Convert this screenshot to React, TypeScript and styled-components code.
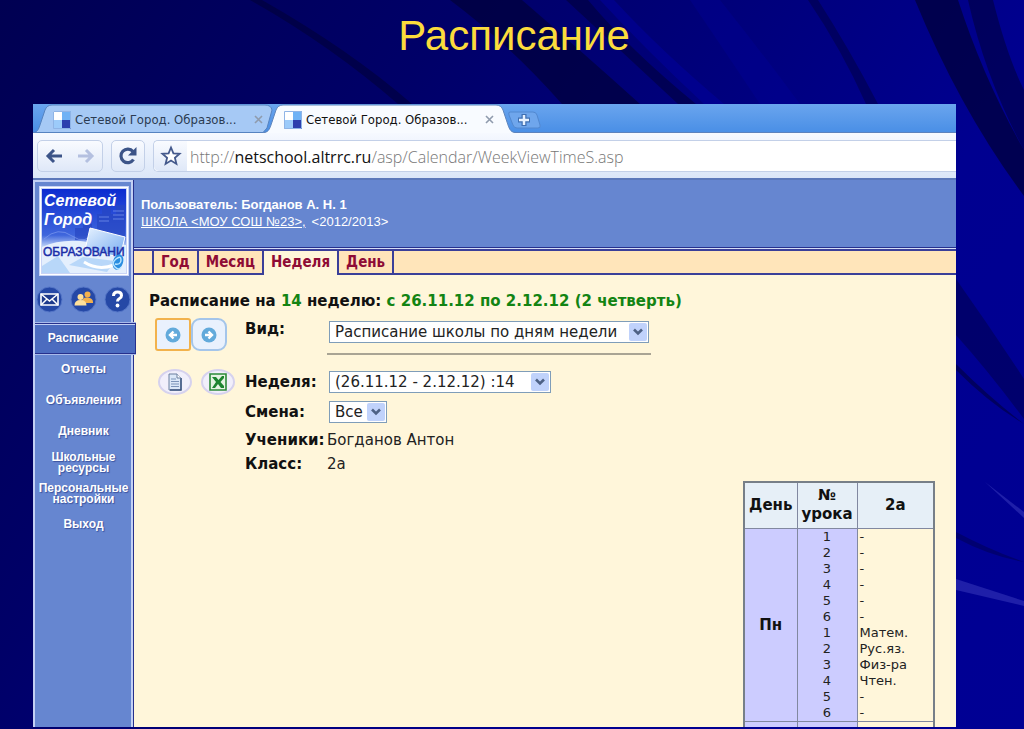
import React from "react";
import styled, { createGlobalStyle, css } from "styled-components";

const verdana = `"DejaVu Sans", Verdana, sans-serif`;
const tahoma = `"DejaVu Sans Condensed", "DejaVu Sans", Tahoma, sans-serif`;
const arial = `"Liberation Sans", Arial, sans-serif`;

const GlobalStyle = createGlobalStyle`
  *, *::before, *::after { box-sizing: border-box; }
  body { margin: 0; background: #000078; font-family: ${verdana}; overflow: hidden; }
  button, select, input { font: inherit; color: inherit; margin: 0; }
`;

const Slide = styled.main`
  position: relative;
  isolation: isolate;
  display: flex;
  flex-direction: column;
  height: 100vh;
  padding: 0 68px 2px 33px;
  background: linear-gradient(125deg, #000052 0%, #000068 30%, #000090 70%, #000094 100%);
`;

const Backdrop = styled.svg`
  position: absolute;
  inset: 0;
  z-index: -1;
  width: 100%;
  height: 100%;
`;

const SlideTitle = styled.h1`
  flex: none;
  margin: 0;
  height: 104px;
  padding: 12px 0 0 39px;
  text-align: center;
  font: 400 42px/48px ${arial};
  color: #fbdc3c;
`;

const Browser = styled.section`
  flex: 1;
  min-height: 0;
  display: flex;
  flex-direction: column;
  overflow: hidden;
  background: #fff6da;
`;

const TabStrip = styled.div`
  flex: none;
  display: flex;
  height: 29px;
  background: linear-gradient(#6aa5ee, #4a8fe6);
  border-bottom: 1px solid #5c82bd;
  font: 13px/28px ${tahoma};
`;

const BrowserTab = styled.div<{ $active?: boolean }>`
  position: relative;
  isolation: isolate;
  display: flex;
  align-items: center;
  gap: 4px;
  width: 231px;
  height: 29px;
  padding: 2px 1px 0 20px;
  color: ${(p) => (p.$active ? "#111" : "#2b3b52")};
`;

const TabShape = styled.svg`
  position: absolute;
  top: 0;
  left: 0;
  z-index: -1;
  overflow: visible;
`;

const TabLabel = styled.span`
  flex: 1;
  white-space: nowrap;
`;

const IconButton = styled.button`
  display: grid;
  place-items: center;
  padding: 0;
  border: 0;
  background: none;
`;

const Toolbar = styled.div`
  flex: none;
  display: flex;
  align-items: center;
  gap: 8px;
  height: 45px;
  padding: 1px 0 0 4px;
  background: linear-gradient(#f6f9ff, #dbe6f8);
`;

const ButtonGroup = styled.div`
  display: flex;
  height: 32px;
  border: 1px solid #c3d0e8;
  border-radius: 5px;
  background: linear-gradient(#f9fbff, #dfe8f8);

  button { width: 32px; }
`;

const AddressBar = styled.div`
  flex: 1;
  display: flex;
  height: 32px;
  border: 1px solid #c3d0e8;
  border-right: 0;
  border-radius: 5px 0 0 5px;
  background: #fff;

  > button {
    width: 33px;
    background: linear-gradient(#f9fbff, #dfe8f8);
    border-radius: 5px 0 0 5px;
  }
`;

const Url = styled.div`
  padding-left: 3px;
  color: #777;
  font: 300 16px/32px "Open Sans", ${arial};
  white-space: nowrap;

  b { font-weight: 400; color: #111; }
`;

const Page = styled.div`
  flex: 1;
  min-height: 0;
  display: flex;
  border-top: 2px solid #5c78ba;
`;

const Sidebar = styled.aside`
  flex: none;
  display: flex;
  flex-direction: column;
  width: 101px;
  background: #6686d0;
  border-left: 2px solid #c3d0f4;
  border-right: 1px solid #26308c;
  box-shadow: inset -2px 0 #c3d0f4, inset 0 2px #c3d0f4;
`;

const LogoFrame = styled.div`
  width: 90px;
  height: 90px;
  margin: 6px 0 0 4px;

  svg { display: block; }
`;

const QuickLinks = styled.div`
  display: flex;
  gap: 7px;
  height: 47px;
  padding: 10px 0 0 1px;

  button { width: 27px; height: 27px; }
`;

const Menu = styled.nav`
  display: flex;
  flex-direction: column;
`;

const MenuLink = styled.a<{ $active?: boolean }>`
  display: flex;
  align-items: center;
  justify-content: center;
  height: 31px;
  padding-right: 1px;
  text-align: center;
  text-decoration: none;
  white-space: pre-line;
  font: 700 12px/11px ${arial};
  color: #fff;
  text-shadow: 1px 1px 1px #3a539f;

  ${(p) =>
    p.$active &&
    css`
      position: relative;
      margin-right: -3px;
      padding-right: 4px;
      background: #4c6cc0;
      border: 1px solid #26308c;
      border-left: 0;
      box-shadow: inset 0 1px #c3d0f4, 0 -1px #a9baea, 0 1px #a9baea;
    `}
`;

const Main = styled.div`
  flex: 1;
  min-width: 0;
  display: flex;
  flex-direction: column;
`;

const UserBar = styled.header`
  flex: none;
  height: 68px;
  padding: 16px 8px 0 7px;
  background: #6686d0;
  border-bottom: 1px solid #26308c;
  font: 13px/17px ${arial};
  color: #fff;

  p { margin: 0; }
  a { color: inherit; margin-right: 6px; }
`;

const ViewTabs = styled.nav`
  flex: none;
  display: flex;
  height: 27px;
  padding: 0 0 0 18px;
  border-top: 1px solid #d6def6;
  box-shadow: inset 0 2px #3a3f99;
  background: linear-gradient(#3a3f99, #3a3f99) 0 100% / 100% 2px no-repeat, #ffe5ba;
`;

const ViewTab = styled.a<{ $active?: boolean }>`
  display: flex;
  align-items: center;
  margin-top: 2px;
  padding: 0 7px 2px;
  border-left: 2px solid #3a3f99;
  font: 700 15px/20px "DejaVu Sans Condensed", ${verdana};
  color: #8e0b35;
  text-decoration: none;
  background: ${(p) => (p.$active ? "#fff6da" : "none")};

  &:last-child { border-right: 2px solid #3a3f99; }
`;

const Content = styled.div`
  flex: 1;
  min-height: 0;
  display: flex;
  flex-direction: column;
  padding: 15px 21px 0 15px;
`;

const Heading = styled.h2`
  flex: none;
  margin: 0;
  font: 700 15px/22px ${verdana};
  color: #111;

  span { color: #138413; }
`;

const Controls = styled.div`
  flex: none;
  display: grid;
  grid-template-columns: 96px 1fr;
  height: 169px;
`;

const Tools = styled.div`
  display: flex;
  flex-direction: column;
  gap: 18px;
  padding: 6px 0 0 6px;
`;

const ArrowRow = styled.div`
  display: flex;
`;

const ExportRow = styled.div`
  display: flex;
  gap: 9px;
  padding-left: 3px;
`;

const ArrowButton = styled(IconButton)<{ $focused?: boolean }>`
  width: 36px;
  height: 33px;
  border: 2px solid ${(p) => (p.$focused ? "#f2b24c" : "#a4c5ea")};
  border-radius: ${(p) => (p.$focused ? 3 : 9)}px;
  background: #e9f1fd;
`;

const ExportButton = styled(IconButton)`
  width: 34px;
  height: 26px;
  border: 2px solid #d6d2ee;
  border-radius: 50%;
  background: #f1effb;
`;

const Fields = styled.div`
  display: flex;
  flex-direction: column;
  align-items: flex-start;
`;

const Field = styled.div<{ $height: number; $raised?: boolean }>`
  display: grid;
  grid-template-columns: 82px auto;
  align-items: center;
  height: ${(p) => p.$height}px;
  font: 15px/20px ${verdana};
  color: #222;
  white-space: nowrap;

  label, strong { font-weight: 700; color: #111; }
  label { padding-bottom: ${(p) => (p.$raised ? 6 : 0)}px; }
`;

const SelectWrap = styled.div<{ $width: number }>`
  position: relative;
  width: ${(p) => p.$width}px;
  margin-left: 2px;

  select {
    appearance: none;
    display: block;
    width: 100%;
    height: 22px;
    padding: 0 5px;
    border: 1px solid #7f9db9;
    border-radius: 0;
    background: #fff;
    line-height: 20px;
  }

  svg {
    position: absolute;
    top: 2px;
    right: 2px;
    pointer-events: none;
  }
`;

const Rule = styled.hr`
  width: 324px;
  height: 2px;
  margin: 1px 0 15px 82px;
  border: 0;
  background: #a9a494;
`;

const Timetable = styled.table`
  align-self: flex-end;
  width: 192px;
  table-layout: fixed;
  border: 2px solid #777f88;
  border-collapse: collapse;
  font: 13px/16px ${verdana};
  color: #222;

  th, td { border: 1px solid #8188a0; padding: 0; }
  thead th {
    height: 46px;
    background: #e6eff7;
    font: 700 15px/19px ${verdana};
    color: #111;
  }
  tbody th {
    background: #ccccff;
    font-size: 15px;
    color: #111;
  }
`;

const NumberCell = styled.td`
  height: 193px;
  background: #ccccff;
  text-align: center;
`;

const LessonCell = styled.td`
  && { padding-left: 2px; }
`;

const Favicon = () => (
  <svg width="18" height="18" viewBox="0 0 18 18" aria-hidden="true">
    <path fill="#fff" d="M0 0h9v9H0z" />
    <path fill="#6fb2f5" d="M9 0h9v9H9z" />
    <path fill="#9ccbfa" d="M0 9h9v9H0z" />
    <path fill="#2d3fae" d="M9 9h9v9H9z" />
    <path fill="none" stroke="#8fb4e6" d="M.5.5h17v17H.5z" />
  </svg>
);

const PageTab = ({ title, active }: { title: string; active?: boolean }) => (
  <BrowserTab $active={active}>
    <TabShape width="240" height="29" aria-hidden="true">
      {active ? (
        <>
          <path d="M0 29C5 28 6 24 8 18L12 6Q14 1 19 1H232Q237 1 239 6L243 18C245 24 246 28 251 29Z" fill="#f8fbff" />
          <path d="M0 28.500C5 28 6 24 8 18L12 6Q14 1 19 1H232Q237 1 239 6L243 18C245 24 246 28 251 28.500" fill="none" stroke="#5f86bd" />
        </>
      ) : (
        <path d="M1 28.500C5 28 6 24 8 18L12 6Q14 1 19 1H232Q238 1 239 6L234 24 230 28.500Z" fill="#a6c9f5" stroke="#5683c0" />
      )}
    </TabShape>
    <Favicon />
    <TabLabel>{title}</TabLabel>
    <IconButton aria-label="Закрыть вкладку">
      <svg width="9" height="9" viewBox="0 0 9 9">
        <path d="M1 1l7 7M8 1L1 8" stroke="#8f9bad" strokeWidth="1.6" />
      </svg>
    </IconButton>
  </BrowserTab>
);

const Select = ({ id, width, value }: { id: string; width: number; value: string }) => (
  <SelectWrap $width={width}>
    <select id={id} defaultValue={value}>
      <option>{value}</option>
    </select>
    <svg width="18" height="18" viewBox="0 0 18 18" aria-hidden="true">
      <rect width="18" height="18" rx="2" fill="#c0d2fb" />
      <path d="M5 6.500l4 4 4-4" fill="none" stroke="#4d6185" strokeWidth="2.600" />
    </svg>
  </SelectWrap>
);

const Logo = () => (
  <svg width="90" height="90" viewBox="0 0 90 90" role="img" aria-label="Сетевой Город">
    <defs>
      <linearGradient id="sky" x1="0" y1="0" x2="0" y2="1">
        <stop offset="0" stopColor="#0b2bd0" />
        <stop offset=".55" stopColor="#3f66dc" />
        <stop offset=".7" stopColor="#c9dcfa" />
        <stop offset="1" stopColor="#fff" />
      </linearGradient>
      <linearGradient id="screen" x1="0" y1="0" x2="1" y2="1">
        <stop offset="0" stopColor="#e7f2ff" />
        <stop offset="1" stopColor="#75abf1" />
      </linearGradient>
    </defs>
    <rect width="90" height="90" fill="#c9d4f6" />
    <rect x="1.500" y="1.500" width="87" height="87" fill="none" stroke="#fff" />
    <rect x="3" y="3" width="84" height="84" fill="url(#sky)" />
    <path d="M58 42V28h5v-6h9v6h5v-9h9v31H58zM36 54V42h8v-4h9v16z" fill="#2746c2" opacity=".7" />
    <path d="M60 31h10M60 35h10M74 25h11M74 29h11M74 33h11M5 53q14-13 28-3t24-6" fill="none" stroke="#7d9af0" opacity=".7" />
    <path d="M3 61q20-9 46-5l38 3v28H3z" fill="#e4effd" />
    <path d="M51 42l35 9-5 20-35-7z" fill="url(#screen)" stroke="#fff" />
    <path d="M3 80l16-10 12 17H3zM44 71l32 4-8 11-38-7z" fill="#a5cdf7" opacity=".7" />
    <path d="M45 76q14 9 30 3" fill="none" stroke="#fff" strokeWidth="3" />
    <g fontFamily={arial} fontWeight="700">
      <g fontStyle="italic" fontSize="16" fill="#fff">
        <text x="5" y="20">Сетевой</text>
        <text x="5" y="39">Город</text>
      </g>
      <text x="4" y="70" fontSize="12" fontWeight="400" fill="#1b2ea8" stroke="#1b2ea8" strokeWidth=".5">ОБРАЗОВАНИ</text>
    </g>
    <ellipse cx="79" cy="76" rx="5" ry="8" transform="rotate(18 79 76)" fill="#2a8ee0" />
    <path d="M76 78q6 1 6-4t-5-1-1 8 6 0" fill="none" stroke="#b9e4ff" strokeWidth="1.500" />
  </svg>
);

const RoundIcon = ({ label, children }: { label: string; children: React.ReactNode }) => (
  <IconButton aria-label={label}>
    <svg width="27" height="27" viewBox="0 0 27 27">
      <circle cx="13.500" cy="13.500" r="12.500" fill="#2548a6" stroke="#5576c8" />
      {children}
    </svg>
  </IconButton>
);

const CircleArrow = ({ flip }: { flip?: boolean }) => (
  <svg width="16" height="16" viewBox="0 0 16 16">
    <circle cx="8" cy="8" r="7.500" fill="#62aadb" />
    <path
      d="M12 8H6M8.500 4.500L5 8l3.500 3.500"
      fill="none"
      stroke="#fff"
      strokeWidth="2.400"
      transform={flip ? "rotate(180 8 8)" : undefined}
    />
  </svg>
);

const menu = ["Расписание", "Отчеты", "Объявления", "Дневник", "Школьные\nресурсы", "Персональные\nнастройки", "Выход"];
const views = ["Год", "Месяц", "Неделя", "День"];
const lessons = [
  ["1", "-"], ["2", "-"], ["3", "-"], ["4", "-"], ["5", "-"], ["6", "-"],
  ["1", "Матем."], ["2", "Рус.яз."], ["3", "Физ-ра"], ["4", "Чтен."], ["5", "-"], ["6", "-"],
];

export default function App() {
  return (
    <Slide>
      <GlobalStyle />
      <Backdrop viewBox="0 0 1024 729" preserveAspectRatio="none" aria-hidden="true">
        <path d="M250 0h12Q350 50 412 104H398Q330 45 250 0z" fill="#000030" opacity=".5" />
        <path d="M450 0h72Q580 50 640 104H562Q510 45 450 0z" fill="#000030" opacity=".6" />
        <path d="M566 0h22Q630 50 696 104H678Q620 50 566 0z" fill="#000030" opacity=".5" />
        <path d="M600 0h14Q660 50 724 104H704Q646 50 600 0z" fill="#0000a0" opacity=".5" />
        <path d="M690 0h30Q760 50 800 104H760Q724 50 690 0z" fill="#0000a0" opacity=".3" />
        <path d="M808 0h10Q850 50 878 104H866Q842 50 808 0z" fill="#000040" opacity=".5" />
        <path d="M915 0h43Q984 80 1024 150v46Q960 110 915 0z" fill="#000030" opacity=".65" />
        <path d="M968 0h25q14 56 31 90v60Q986 80 968 0z" fill="#000030" opacity=".5" />
        <path d="M956 279q34 48 68 100v40q-34-46-68-84z" fill="#000040" opacity=".45" />
        <path d="M956 364q34 34 68 60-34-20-68-54z" fill="#000040" opacity=".6" />
        <path d="M985 482l39 30v6z" fill="#3434b8" opacity=".6" />
        <path d="M956 532q34 18 68 30-34-6-68-24z" fill="#000050" opacity=".5" />
        <path d="M956 579l68 22v5l-68-16z" fill="#3434b8" opacity=".6" />
      </Backdrop>
      <SlideTitle>Расписание</SlideTitle>
      <Browser>
        <TabStrip>
          <PageTab title="Сетевой Город. Образов..." />
          <PageTab title="Сетевой Город. Образов..." active />
          <IconButton aria-label="Новая вкладка">
            <svg width="56" height="28" viewBox="0 0 56 28">
              <path d="M15 8h23q3 0 4 3l3 10q1 3-2 3H22q-3 0-4-3l-4-10q-1-3 1-3z" fill="#6fa6ec" stroke="#5288d0" />
              <path d="M29 10v12M23 16h12" stroke="#3f6fb2" strokeWidth="5" />
              <path d="M29 11v10M24 16h10" stroke="#e6f1ff" strokeWidth="2.500" />
            </svg>
          </IconButton>
        </TabStrip>
        <Toolbar>
          <ButtonGroup>
            <IconButton aria-label="Назад">
              <svg width="18" height="16" viewBox="0 0 18 16">
                <path d="M17 8H3M9 2L3 8l6 6" fill="none" stroke="#3c5488" strokeWidth="3" />
              </svg>
            </IconButton>
            <IconButton aria-label="Вперед">
              <svg width="18" height="16" viewBox="0 0 18 16">
                <path d="M1 8h14M9 2l6 6-6 6" fill="none" stroke="#b4c0e0" strokeWidth="3" />
              </svg>
            </IconButton>
          </ButtonGroup>
          <ButtonGroup>
            <IconButton aria-label="Обновить">
              <svg width="20" height="20" viewBox="0 0 20 20">
                <path d="M15.500 13.500a6.800 6.800 0 1 1-.5-8" fill="none" stroke="#3c5488" strokeWidth="3.200" />
                <path d="M18.500 1v8.500H10z" fill="#3c5488" />
              </svg>
            </IconButton>
          </ButtonGroup>
          <AddressBar>
            <IconButton aria-label="Добавить в закладки">
              <svg width="22" height="22" viewBox="0 0 22 22">
                <path d="M11 2.500l2.400 5.800 6.200.5-4.700 4 1.500 6.100L11 15.600l-5.400 3.300 1.500-6.100-4.700-4 6.200-.5z" fill="#fff" stroke="#44598c" strokeWidth="1.800" />
              </svg>
            </IconButton>
            <Url>
              http://<b>netschool.altrrc.ru</b>/asp/Calendar/WeekViewTimeS.asp
            </Url>
          </AddressBar>
        </Toolbar>
        <Page>
          <Sidebar>
            <LogoFrame>
              <Logo />
            </LogoFrame>
            <QuickLinks>
              <RoundIcon label="Почта">
                <path d="M5 8h17v11H5z" fill="#1d3a8c" stroke="#fff" strokeWidth="1.600" />
                <path d="M5 8l8.500 7L22 8M5 19l6-6M22 19l-6-6" fill="none" stroke="#fff" strokeWidth="1.500" />
              </RoundIcon>
              <RoundIcon label="Пользователи">
                <circle cx="17.500" cy="8.500" r="3" fill="#f2b04d" />
                <path d="M12 16q0-5 5.500-4.500T23 16v1H12z" fill="#f2b04d" />
                <circle cx="10.500" cy="11" r="3" fill="#ffe09a" />
                <path d="M4.500 19.500q0-5.500 6-5.500t6 5.500z" fill="#ffe09a" />
              </RoundIcon>
              <RoundIcon label="Справка">
                <path d="M9.500 10q0-4 4-4t4 3.500q0 2-2 3t-2 3" fill="none" stroke="#fff" strokeWidth="3" />
                <circle cx="13.500" cy="19.500" r="1.900" fill="#fff" />
              </RoundIcon>
            </QuickLinks>
            <Menu>
              {menu.map((item, i) => (
                <MenuLink key={item} href="#" $active={i === 0}>
                  {item}
                </MenuLink>
              ))}
            </Menu>
          </Sidebar>
          <Main>
            <UserBar>
              <p>
                <b>Пользователь: Богданов А. Н. 1</b>
              </p>
              <p>
                <a href="#">ШКОЛА &lt;МОУ СОШ №23&gt;,</a>
                &lt;2012/2013&gt;
              </p>
            </UserBar>
            <ViewTabs>
              {views.map((view) => (
                <ViewTab key={view} href="#" $active={view === "Неделя"}>
                  {view}
                </ViewTab>
              ))}
            </ViewTabs>
            <Content>
              <Heading>
                Расписание на <span>14</span> неделю: <span>с 26.11.12 по 2.12.12 (2 четверть)</span>
              </Heading>
              <Controls>
                <Tools>
                  <ArrowRow>
                    <ArrowButton $focused aria-label="Предыдущая неделя">
                      <CircleArrow />
                    </ArrowButton>
                    <ArrowButton aria-label="Следующая неделя">
                      <CircleArrow flip />
                    </ArrowButton>
                  </ArrowRow>
                  <ExportRow>
                    <ExportButton aria-label="Печать">
                      <svg width="16" height="18" viewBox="0 0 16 18">
                        <path d="M2 1h8l4 4v12H2z" fill="#dce8f8" stroke="#6b7f9e" />
                        <path d="M14 5v12H3" fill="none" stroke="#3c5580" strokeWidth="1.500" />
                        <path d="M10 1v4h4" fill="#fff" stroke="#6b7f9e" />
                        <path d="M4 6h5M4 8.500h8M4 11h8M4 13.500h8" stroke="#7d95ba" />
                      </svg>
                    </ExportButton>
                    <ExportButton aria-label="Экспорт в Excel">
                      <svg width="18" height="18" viewBox="0 0 18 18">
                        <path d="M1 1h16v16H1z" fill="#e4f3e2" stroke="#2c8a3a" strokeWidth="1.600" />
                        <path d="M3 4h4l2.500 3L13 3h2v2l-3.500 4 3.500 4v2h-3l-3-4-3 4H3l4-6z" fill="#1d8430" />
                      </svg>
                    </ExportButton>
                  </ExportRow>
                </Tools>
                <Fields>
                  <Field $height={40} $raised>
                    <label htmlFor="view">Вид:</label>
                    <Select id="view" width={320} value="Расписание школы по дням недели" />
                  </Field>
                  <Rule />
                  <Field $height={24}>
                    <label htmlFor="week">Неделя:</label>
                    <Select id="week" width={222} value="(26.11.12 - 2.12.12) :14" />
                  </Field>
                  <Field $height={36}>
                    <label htmlFor="shift">Смена:</label>
                    <Select id="shift" width={58} value="Все" />
                  </Field>
                  <Field $height={20}>
                    <strong>Ученики:</strong>
                    <span>Богданов Антон</span>
                  </Field>
                  <Field $height={28}>
                    <strong>Класс:</strong>
                    <span>2а</span>
                  </Field>
                </Fields>
              </Controls>
              <Timetable>
                <colgroup>
                  <col width="53" />
                  <col width="60" />
                  <col />
                </colgroup>
                <thead>
                  <tr>
                    <th scope="col">День</th>
                    <th scope="col">
                      №<br />
                      урока
                    </th>
                    <th scope="col">2а</th>
                  </tr>
                </thead>
                <tbody>
                  <tr>
                    <th scope="row">Пн</th>
                    <NumberCell>
                      {lessons.map(([n], i) => (
                        <div key={i}>{n}</div>
                      ))}
                    </NumberCell>
                    <LessonCell>
                      {lessons.map(([, name], i) => (
                        <div key={i}>{name}</div>
                      ))}
                    </LessonCell>
                  </tr>
                  <tr>
                    <th scope="row">&nbsp;</th>
                    <NumberCell />
                    <LessonCell />
                  </tr>
                </tbody>
              </Timetable>
            </Content>
          </Main>
        </Page>
      </Browser>
    </Slide>
  );
}
